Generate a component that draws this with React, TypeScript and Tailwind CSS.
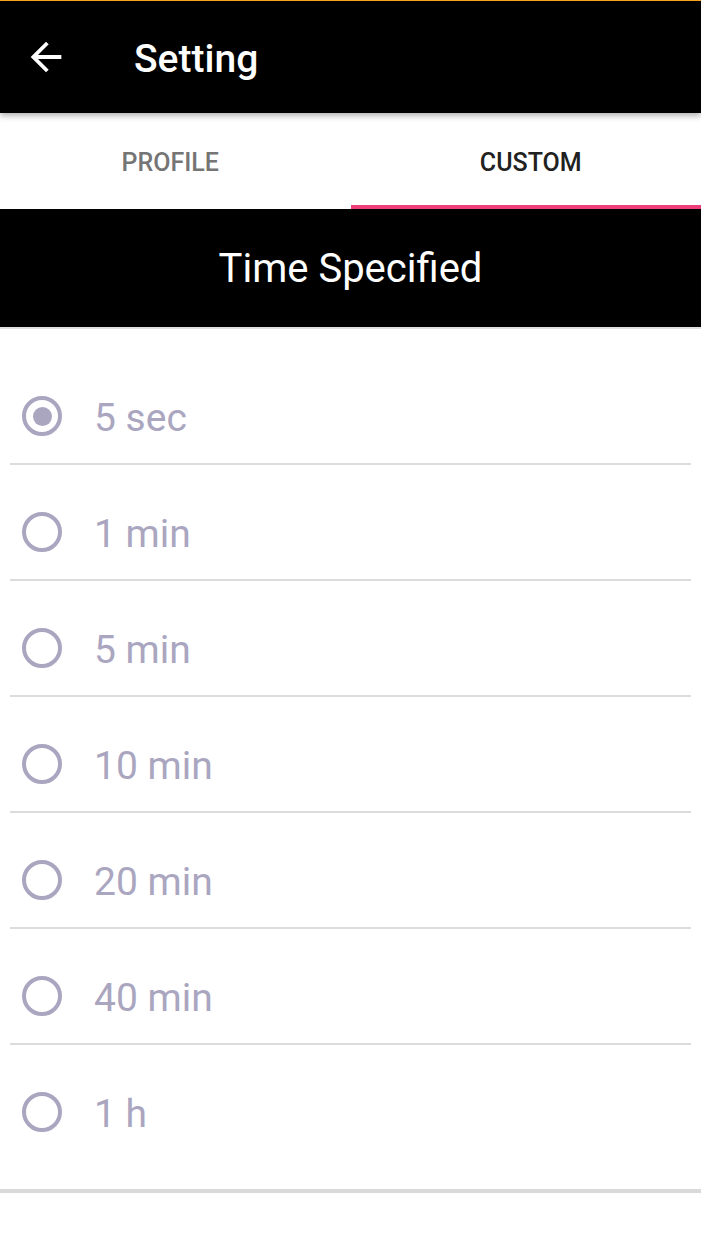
import { useState } from 'react';

const OPTIONS = ['5 sec', '1 min', '5 min', '10 min', '20 min', '40 min', '1 h'];

type Tab = 'profile' | 'custom';

export default function App() {
  const [tab, setTab] = useState<Tab>('custom');
  const [selected, setSelected] = useState('5 sec');

  return (
    <div className="min-h-screen bg-white font-['Roboto','Liberation_Sans',sans-serif]">
      {/* Toolbar */}
      <header className="relative z-10 h-[113px] bg-black border-t border-[#f7a21b] flex items-center shadow-[0_3px_6px_rgba(0,0,0,0.3)]">
        <button className="ml-[23px] w-[46px] h-[46px] flex items-center justify-center text-white">
          <svg viewBox="0 0 24 24" width="46" height="46" fill="currentColor">
            <path d="M20 11H7.83l5.59-5.59L12 4l-8 8 8 8 1.41-1.41L7.83 13H20v-2z" />
          </svg>
        </button>
        <h1 className="ml-[65px] mt-[4px] text-[39px] font-medium text-white leading-none">Setting</h1>
      </header>

      {/* Tabs */}
      <div className="flex h-[96px] bg-white">
        {(['profile', 'custom'] as Tab[]).map(t => (
          <button
            key={t}
            onClick={() => setTab(t)}
            className={`relative flex-1 flex items-center justify-center pt-[4px] text-[25px] font-medium uppercase ${
              t === 'profile' ? 'pr-[10px]' : 'pl-[10px]'
            } ${tab === t ? 'text-[#212121]' : 'text-[#757575]'}`}
          >
            {t}
            {tab === t && <span className="absolute left-0 right-0 bottom-0 h-[4px] bg-[#ef3f78]" />}
          </button>
        ))}
      </div>

      {/* Section title */}
      <div className="h-[120px] bg-black border-b-2 border-[#e0e0e0] flex items-center justify-center">
        <span className="text-[40px] text-white mt-[2px]">Time Specified</span>
      </div>

      {/* Radio list */}
      <div className="pt-[20px] px-[10px]">
        {OPTIONS.map((opt, i) => (
          <div
            key={opt}
            onClick={() => setSelected(opt)}
            className={`pt-[20px] ${i < OPTIONS.length - 1 ? 'border-b-2 border-[#dcdcdc]' : ''}`}
          >
            <div className="h-[94px] flex items-center gap-[32px] pl-[12px] cursor-pointer">
              <span className="w-[40px] h-[40px] rounded-full border-4 border-[#aaa6c0] flex items-center justify-center shrink-0">
                {selected === opt && <span className="w-[19px] h-[19px] rounded-full bg-[#aaa6c0]" />}
              </span>
              <span className="text-[39px] text-[#aaa6c0] leading-none mt-[4px]">{opt}</span>
            </div>
          </div>
        ))}
      </div>

      <div className="mt-[30px] h-[4px] bg-[#d9d9d9]" />
    </div>
  );
}
